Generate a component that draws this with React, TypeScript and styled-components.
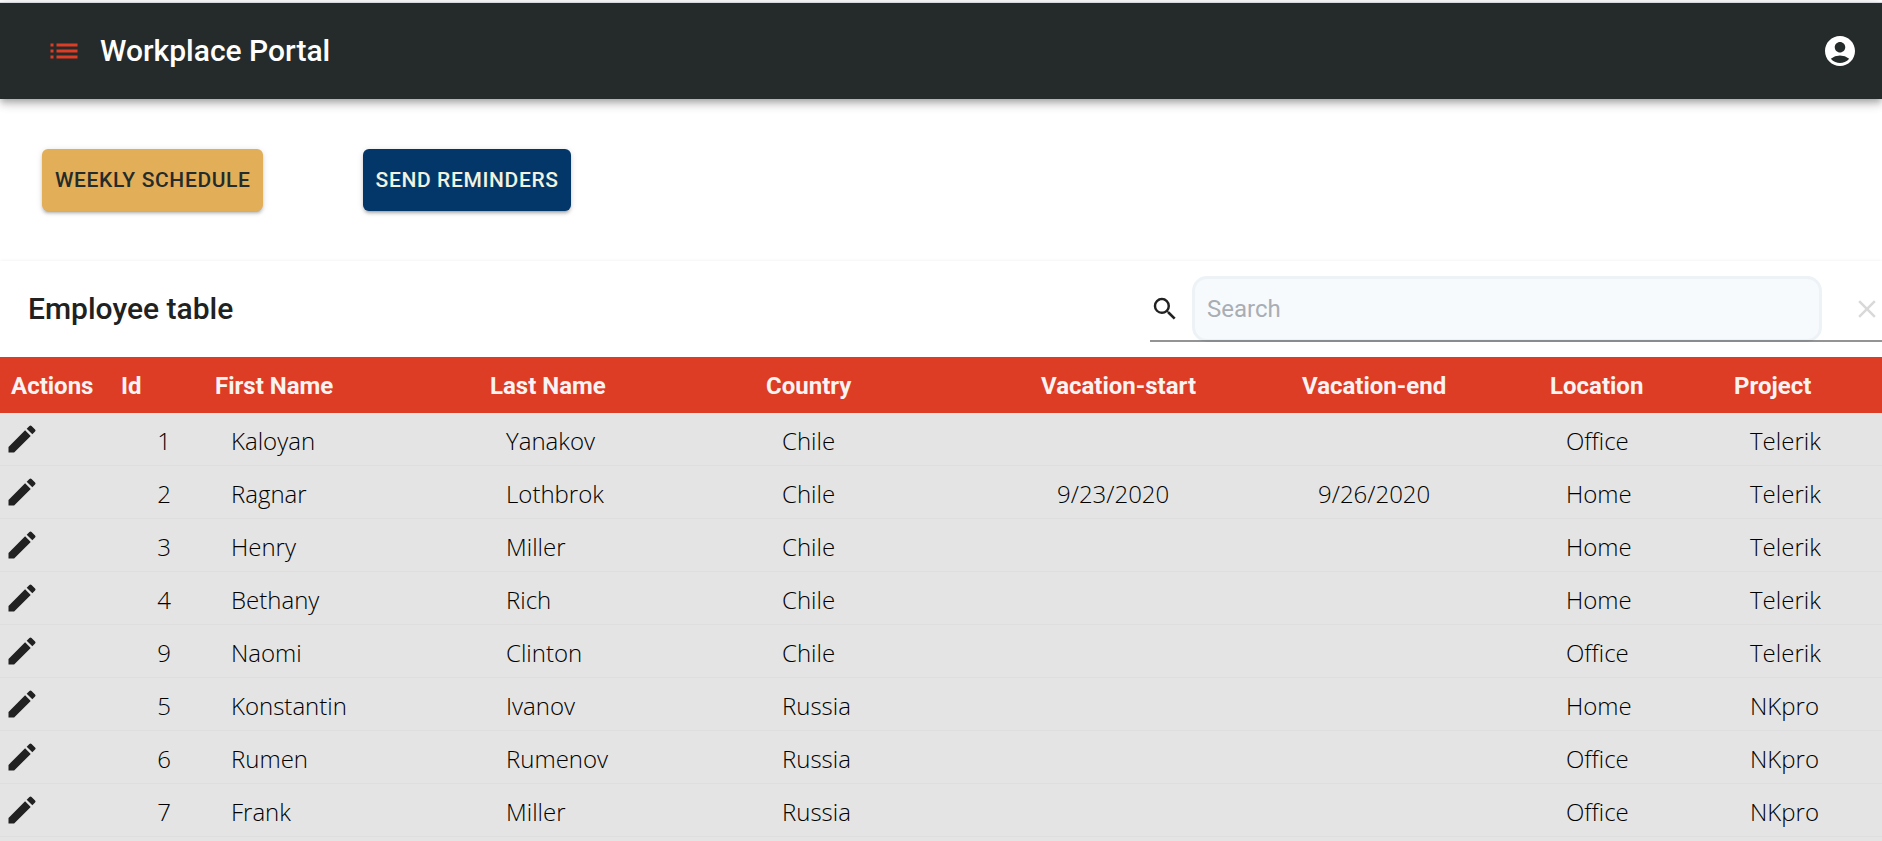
import React from 'react';
import styled, { createGlobalStyle } from 'styled-components';
import { MdAccountCircle, MdClear, MdEdit, MdList, MdSearch } from 'react-icons/md';

const GlobalStyle = createGlobalStyle`
  *, *::before, *::after { box-sizing: border-box; }
  body {
    margin: 0;
    background: #fff;
    color: #212121;
    font-family: Roboto, "Liberation Sans", sans-serif;
    overflow-x: hidden;
  }
`;

const Page = styled.div`
  display: flex;
  flex-direction: column;
  min-height: 100vh;
  padding-top: 2px;
`;

const AppBar = styled.header`
  display: flex;
  align-items: center;
  justify-content: space-between;
  height: 97px;
  padding: 0 24px 0 46px;
  border-top: 1px solid #d5d8da;
  background: #242b2a;
  color: #fff;
  box-shadow: 0 3px 6px -1px rgba(0, 0, 0, 0.2), 0 6px 8px 0 rgba(0, 0, 0, 0.14),
    0 1px 15px 0 rgba(0, 0, 0, 0.12);
`;

const Brand = styled.div`
  display: flex;
  align-items: center;
  gap: 18px;
`;

const Title = styled.h1`
  margin: 0;
  font-size: 30px;
  font-weight: 500;
  line-height: 48px;
`;

const IconButton = styled.button<{ $size: number; $color?: string }>`
  display: inline-flex;
  flex: none;
  padding: 0;
  border: 0;
  background: none;
  color: ${({ $color }) => $color ?? 'inherit'};
  font-size: ${({ $size }) => $size}px;
  cursor: pointer;
`;

const Actions = styled.div`
  display: flex;
  gap: 100px;
  padding: 50px 42px;
`;

const ActionButton = styled.button<{ $bg: string; $fg: string }>`
  height: 62px;
  padding: 0 12px 0 13px;
  border: 0;
  border-radius: 6px;
  background: ${({ $bg }) => $bg};
  color: ${({ $fg }) => $fg};
  font: 500 21px/36px Roboto, "Liberation Sans", sans-serif;
  letter-spacing: 0.03em;
  text-transform: uppercase;
  cursor: pointer;
  box-shadow: 0 4px 2px -3px rgba(0, 0, 0, 0.2), 0 3px 3px 0 rgba(0, 0, 0, 0.14),
    0 1px 6px 0 rgba(0, 0, 0, 0.12);
`;

const Panel = styled.main`
  flex: 1;
  display: flex;
  flex-direction: column;
  box-shadow: 0 3px 2px -2px rgba(0, 0, 0, 0.2), 0 2px 2px 0 rgba(0, 0, 0, 0.14),
    0 1px 4px 0 rgba(0, 0, 0, 0.12);
`;

const Toolbar = styled.div`
  display: flex;
  align-items: center;
  justify-content: space-between;
  height: 96px;
  padding-left: 28px;
`;

const Heading = styled.h2`
  margin: 0;
  font-size: 30px;
  font-weight: 500;
  line-height: 48px;
`;

const SearchField = styled.div`
  position: relative;
  display: flex;
  align-items: center;
  width: 732px;
  max-width: 60%;
  &::after {
    content: "";
    position: absolute;
    inset: auto 0 0 0;
    height: 2px;
    background: rgba(0, 0, 0, 0.42);
    pointer-events: none;
  }
`;

const SearchLabel = styled.label`
  display: flex;
  padding-right: 12px;
  font-size: 30px;
`;

const SearchInput = styled.input`
  flex: 1;
  min-width: 0;
  height: 66px;
  margin-right: 30px;
  padding: 0 12px;
  border: 3px solid #edf2f7;
  border-radius: 15px;
  background: #f7fafc;
  color: #212121;
  font: 400 24px/32px Roboto, "Liberation Sans", sans-serif;
  &::placeholder { color: #a9adb4; opacity: 1; }
`;

const TableArea = styled.div`
  flex: 1;
  background: #e4e4e4;
`;

const Table = styled.table`
  width: 100%;
  table-layout: fixed;
  border-collapse: separate;
  border-spacing: 0;
`;

const Column = styled.col<{ $width: number }>`
  width: ${({ $width }) => $width}px;
`;

const HeadCell = styled.th`
  height: 56px;
  padding: 2px 6px 0;
  background: #dd3c25;
  color: #f8f3f2;
  font-size: 24px;
  font-weight: 700;
  line-height: 32px;
  text-align: left;
  white-space: nowrap;
  &:first-child { padding-left: 11px; }
`;

const Cell = styled.td<{ $numeric?: boolean }>`
  height: 53px;
  padding: 4px ${({ $numeric }) => ($numeric ? 38 : 0)}px 0 22px;
  border-bottom: 1px solid #dedede;
  color: #000;
  font-family: "Open Sans", "Noto Sans", sans-serif;
  font-size: 24px;
  font-weight: 300;
  line-height: 32px;
  text-align: ${({ $numeric }) => ($numeric ? 'right' : 'left')};
  white-space: nowrap;
`;

const ActionCell = styled(Cell)`
  padding: 0 0 0 4px;
  line-height: 0;
`;

const columns = [
  { label: 'Actions', width: 115 },
  { label: 'Id', width: 94 },
  { label: 'First Name', width: 275 },
  { label: 'Last Name', width: 276 },
  { label: 'Country', width: 275 },
  { label: 'Vacation-start', width: 261 },
  { label: 'Vacation-end', width: 248 },
  { label: 'Location', width: 184 },
  { label: 'Project', width: 154 },
];

const employees = [
  [1, 'Kaloyan', 'Yanakov', 'Chile', '', '', 'Office', 'Telerik'],
  [2, 'Ragnar', 'Lothbrok', 'Chile', '9/23/2020', '9/26/2020', 'Home', 'Telerik'],
  [3, 'Henry', 'Miller', 'Chile', '', '', 'Home', 'Telerik'],
  [4, 'Bethany', 'Rich', 'Chile', '', '', 'Home', 'Telerik'],
  [9, 'Naomi', 'Clinton', 'Chile', '', '', 'Office', 'Telerik'],
  [5, 'Konstantin', 'Ivanov', 'Russia', '', '', 'Home', 'NKpro'],
  [6, 'Rumen', 'Rumenov', 'Russia', '', '', 'Office', 'NKpro'],
  [7, 'Frank', 'Miller', 'Russia', '', '', 'Office', 'NKpro'],
];

export default function App() {
  return (
    <>
      <GlobalStyle />
      <Page>
        <AppBar>
          <Brand>
            <IconButton type="button" aria-label="Menu" $size={36} $color="#dd3c25">
              <MdList />
            </IconButton>
            <Title>Workplace Portal</Title>
          </Brand>
          <IconButton type="button" aria-label="Account" $size={36}>
            <MdAccountCircle />
          </IconButton>
        </AppBar>
        <Actions>
          <ActionButton type="button" $bg="#e3ae58" $fg="#242b2a">Weekly schedule</ActionButton>
          <ActionButton type="button" $bg="#043769" $fg="#f1f3e0">Send reminders</ActionButton>
        </Actions>
        <Panel>
          <Toolbar>
            <Heading>Employee table</Heading>
            <SearchField>
              <SearchLabel htmlFor="employee-search" aria-label="Search">
                <MdSearch />
              </SearchLabel>
              <SearchInput id="employee-search" type="text" placeholder="Search" />
              <IconButton type="button" aria-label="Clear search" disabled $size={30} $color="#d9d9d9">
                <MdClear />
              </IconButton>
            </SearchField>
          </Toolbar>
          <TableArea>
            <Table>
              <colgroup>
                {columns.map((c) => <Column key={c.label} $width={c.width} />)}
              </colgroup>
              <thead>
                <tr>
                  {columns.map((c) => <HeadCell key={c.label} scope="col">{c.label}</HeadCell>)}
                </tr>
              </thead>
              <tbody>
                {employees.map(([id, ...fields]) => (
                  <tr key={id}>
                    <ActionCell>
                      <IconButton type="button" aria-label={`Edit employee ${id}`} $size={36} $color="#212121">
                        <MdEdit />
                      </IconButton>
                    </ActionCell>
                    <Cell $numeric>{id}</Cell>
                    {fields.map((value, i) => <Cell key={i}>{value}</Cell>)}
                  </tr>
                ))}
              </tbody>
            </Table>
          </TableArea>
        </Panel>
      </Page>
    </>
  );
}
